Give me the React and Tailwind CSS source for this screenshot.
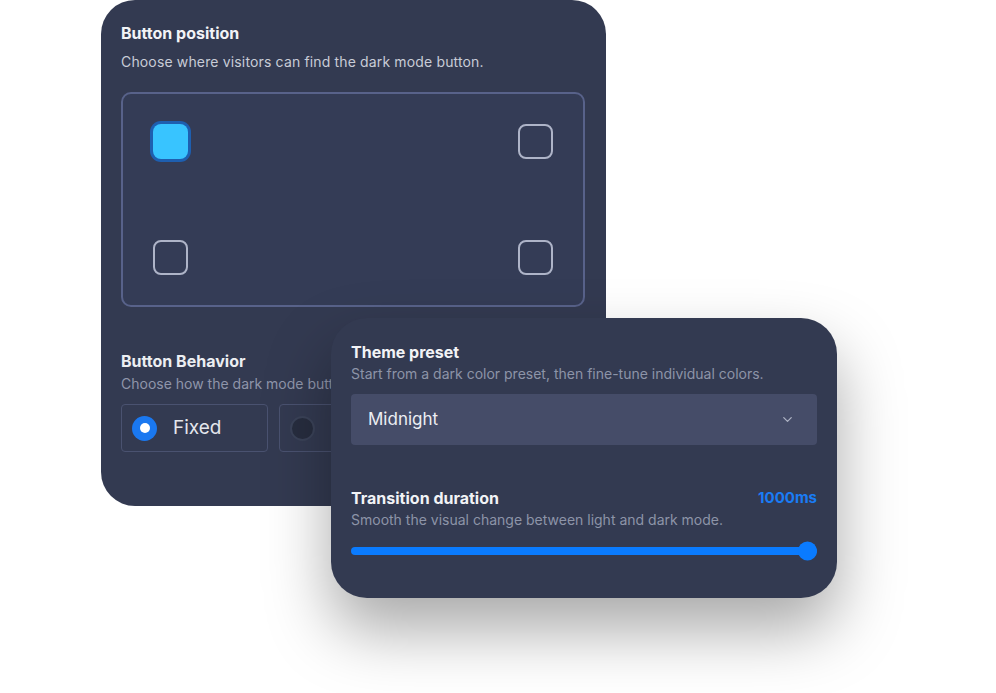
import React from "react";
import { ChevronDown } from "lucide-react";

function Corner({ active }) {
  if (active) {
    return (
      <div className="w-[41px] h-[41px] rounded-[11px] bg-[#1e5fb0] p-[3px] -m-[3px]">
        <div className="w-full h-full rounded-[8px] bg-[#38c4ff]" />
      </div>
    );
  }
  return <div className="w-[35px] h-[35px] rounded-[8px] border-2 border-[#aeb4c8]" />;
}

function Radio({ label, checked }) {
  return (
    <div className="w-[147px] h-[48px] rounded-[4px] border border-[#4a5270] flex items-center pl-[10px] gap-[16px] shrink-0">
      {checked ? (
        <div className="w-[25px] h-[25px] rounded-full bg-[#1a78f0] flex items-center justify-center">
          <div className="w-[10px] h-[10px] rounded-full bg-white" />
        </div>
      ) : (
        <div className="w-[25px] h-[25px] rounded-full bg-[#272d3f] border-2 border-[#3b4359]" />
      )}
      {label && <span className="text-[19px] text-[#e4e6ec]">{label}</span>}
    </div>
  );
}

export default function App() {
  return (
    <div className="w-[996px] h-[693px] bg-white overflow-hidden font-['Inter','Liberation_Sans',sans-serif]">
      {/* settings card: position + behaviour */}
      <div className="ml-[101px] w-[505px] h-[506px] rounded-[34px] bg-[#333a51] pl-5 pr-5 pt-[23px]">
        <h2 className="text-[16px] leading-5 font-bold text-[#f2f3f6]">Button position</h2>
        <p className="mt-[9px] text-[14px] leading-5 text-[#c8ccd7] tracking-[0.15px]">
          Choose where visitors can find the dark mode button.
        </p>
        <div className="mt-[20px] w-[464px] h-[215px] rounded-[10px] border-2 border-[#58628a] bg-[#343c56] p-[30px] flex flex-col justify-between">
          <div className="flex justify-between items-center">
            <Corner active />
            <Corner />
          </div>
          <div className="flex justify-between items-center">
            <Corner />
            <Corner />
          </div>
        </div>

        <h2 className="mt-[44px] text-[16px] leading-5 font-bold text-[#eceef2]">Button Behavior</h2>
        <div className="mt-[3px] w-[210px] overflow-hidden">
          <p className="text-[14px] leading-5 text-[#8f95aa] whitespace-nowrap">
            Choose how the dark mode button behaves.
          </p>
        </div>
        <div className="mt-[10px] flex gap-[11px]">
          <Radio label="Fixed" checked />
          <Radio />
        </div>
      </div>

      {/* appearance card: preset + transition */}
      <div className="relative z-10 -mt-[188px] ml-[331px] w-[506px] h-[280px] rounded-[36px] bg-[#333a51] shadow-[0_32px_64px_rgba(0,0,0,0.34)] px-5 pt-[24px]">
        <h2 className="text-[16px] leading-5 font-bold text-[#f2f3f6]">Theme preset</h2>
        <p className="mt-[2px] text-[14px] leading-5 text-[#8d94a8]">
          Start from a dark color preset, then fine-tune individual colors.
        </p>
        <div className="mt-[10px] h-[51px] rounded-[4px] bg-[#454c68] flex items-center justify-between pl-[17px] pr-[22px]">
          <span className="text-[17px] text-[#eceef3]">Midnight</span>
          <ChevronDown size={15} strokeWidth={2} className="text-[#aeb3c4]" />
        </div>

        <div className="mt-[43px] flex items-center justify-between">
          <h2 className="text-[16px] leading-5 font-bold text-[#f2f3f6]">Transition duration</h2>
          <span className="text-[15px] leading-5 font-bold text-[#1a7cf5]">1000ms</span>
        </div>
        <p className="mt-[2px] text-[14px] leading-5 text-[#8d94a8]">
          Smooth the visual change between light and dark mode.
        </p>
        <div className="mt-[17px] relative h-[8px] rounded-full bg-[#0a7bff]">
          <div className="absolute right-0 top-1/2 -translate-y-1/2 w-[19px] h-[19px] rounded-full bg-[#0a7bff]" />
        </div>
      </div>
    </div>
  );
}
